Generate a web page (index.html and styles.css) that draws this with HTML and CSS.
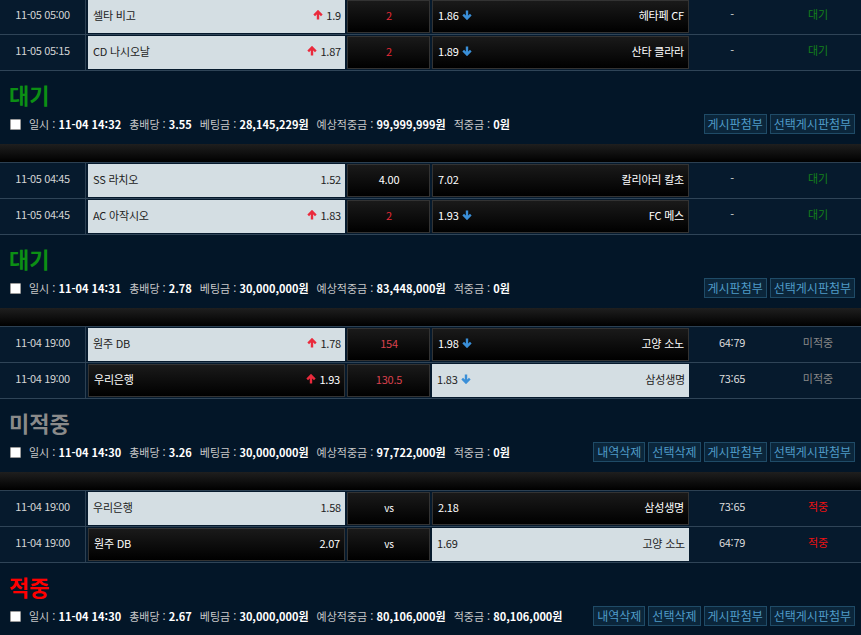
FILE: index.html
```html
<!DOCTYPE html>
<html lang="ko">
<head>
  <meta charset="UTF-8">
  <title>베팅내역</title>
  <link rel="stylesheet" href="styles.css">
</head>
<body>

  <!-- 대기 -->
  <section class="bet">
    <div class="bet-table cut">
      <div class="row">
        <div class="time">11-05 05:00</div>
        <div class="box light home"><span class="team">셀타 비고</span><span class="odd"><svg class="up" viewBox="0 0 10 10"><path d="M5 9.5V1.5M1.2 5.3L5 1.5L8.8 5.3"/></svg>1.9</span></div>
        <div class="box dark draw red">2</div>
        <div class="box dark away"><span class="odd">1.86<svg class="down" viewBox="0 0 10 10"><path d="M5 0.5V8.5M1.2 4.7L5 8.5L8.8 4.7"/></svg></span><span class="team">헤타페 CF</span></div>
        <div class="score">-</div>
        <div class="state wait">대기</div>
      </div>
      <div class="row">
        <div class="time">11-05 05:15</div>
        <div class="box light home"><span class="team">CD 나시오날</span><span class="odd"><svg class="up" viewBox="0 0 10 10"><path d="M5 9.5V1.5M1.2 5.3L5 1.5L8.8 5.3"/></svg>1.87</span></div>
        <div class="box dark draw red">2</div>
        <div class="box dark away"><span class="odd">1.89<svg class="down" viewBox="0 0 10 10"><path d="M5 0.5V8.5M1.2 4.7L5 8.5L8.8 4.7"/></svg></span><span class="team">산타 클라라</span></div>
        <div class="score">-</div>
        <div class="state wait">대기</div>
      </div>
    </div>
    <h2 class="status-title wait">대기</h2>
    <div class="info">
      <input type="checkbox" class="chk">
      <span>일시 : <b>11-04 14:32</b></span>
      <span>총배당 : <b>3.55</b></span>
      <span>베팅금 : <b>28,145,229원</b></span>
      <span>예상적중금 : <b>99,999,999원</b></span>
      <span>적중금 : <b>0원</b></span>
      <div class="btns">
        <button class="btn">게시판첨부</button>
        <button class="btn">선택게시판첨부</button>
      </div>
    </div>
  </section>

  <!-- 대기 -->
  <section class="bet">
    <div class="bar"></div>
    <div class="bet-table">
      <div class="row">
        <div class="time">11-05 04:45</div>
        <div class="box light home"><span class="team">SS 라치오</span><span class="odd">1.52</span></div>
        <div class="box dark draw">4.00</div>
        <div class="box dark away"><span class="odd">7.02</span><span class="team">칼리아리 칼초</span></div>
        <div class="score">-</div>
        <div class="state wait">대기</div>
      </div>
      <div class="row">
        <div class="time">11-05 04:45</div>
        <div class="box light home"><span class="team">AC 아작시오</span><span class="odd"><svg class="up" viewBox="0 0 10 10"><path d="M5 9.5V1.5M1.2 5.3L5 1.5L8.8 5.3"/></svg>1.83</span></div>
        <div class="box dark draw red">2</div>
        <div class="box dark away"><span class="odd">1.93<svg class="down" viewBox="0 0 10 10"><path d="M5 0.5V8.5M1.2 4.7L5 8.5L8.8 4.7"/></svg></span><span class="team">FC 메스</span></div>
        <div class="score">-</div>
        <div class="state wait">대기</div>
      </div>
    </div>
    <h2 class="status-title wait">대기</h2>
    <div class="info">
      <input type="checkbox" class="chk">
      <span>일시 : <b>11-04 14:31</b></span>
      <span>총배당 : <b>2.78</b></span>
      <span>베팅금 : <b>30,000,000원</b></span>
      <span>예상적중금 : <b>83,448,000원</b></span>
      <span>적중금 : <b>0원</b></span>
      <div class="btns">
        <button class="btn">게시판첨부</button>
        <button class="btn">선택게시판첨부</button>
      </div>
    </div>
  </section>

  <!-- 미적중 -->
  <section class="bet">
    <div class="bar"></div>
    <div class="bet-table">
      <div class="row">
        <div class="time">11-04 19:00</div>
        <div class="box light home"><span class="team">원주 DB</span><span class="odd"><svg class="up" viewBox="0 0 10 10"><path d="M5 9.5V1.5M1.2 5.3L5 1.5L8.8 5.3"/></svg>1.78</span></div>
        <div class="box dark draw line">154</div>
        <div class="box dark away"><span class="odd">1.98<svg class="down" viewBox="0 0 10 10"><path d="M5 0.5V8.5M1.2 4.7L5 8.5L8.8 4.7"/></svg></span><span class="team">고양 소노</span></div>
        <div class="score">64:79</div>
        <div class="state miss">미적중</div>
      </div>
      <div class="row">
        <div class="time">11-04 19:00</div>
        <div class="box dark home"><span class="team">우리은행</span><span class="odd"><svg class="up" viewBox="0 0 10 10"><path d="M5 9.5V1.5M1.2 5.3L5 1.5L8.8 5.3"/></svg>1.93</span></div>
        <div class="box dark draw line">130.5</div>
        <div class="box light away"><span class="odd">1.83<svg class="down" viewBox="0 0 10 10"><path d="M5 0.5V8.5M1.2 4.7L5 8.5L8.8 4.7"/></svg></span><span class="team">삼성생명</span></div>
        <div class="score">73:65</div>
        <div class="state miss">미적중</div>
      </div>
    </div>
    <h2 class="status-title miss">미적중</h2>
    <div class="info">
      <input type="checkbox" class="chk">
      <span>일시 : <b>11-04 14:30</b></span>
      <span>총배당 : <b>3.26</b></span>
      <span>베팅금 : <b>30,000,000원</b></span>
      <span>예상적중금 : <b>97,722,000원</b></span>
      <span>적중금 : <b>0원</b></span>
      <div class="btns">
        <button class="btn">내역삭제</button>
        <button class="btn">선택삭제</button>
        <button class="btn">게시판첨부</button>
        <button class="btn">선택게시판첨부</button>
      </div>
    </div>
  </section>

  <!-- 적중 -->
  <section class="bet">
    <div class="bar"></div>
    <div class="bet-table">
      <div class="row">
        <div class="time">11-04 19:00</div>
        <div class="box light home"><span class="team">우리은행</span><span class="odd">1.58</span></div>
        <div class="box dark draw vs">vs</div>
        <div class="box dark away"><span class="odd">2.18</span><span class="team">삼성생명</span></div>
        <div class="score">73:65</div>
        <div class="state hit">적중</div>
      </div>
      <div class="row">
        <div class="time">11-04 19:00</div>
        <div class="box dark home"><span class="team">원주 DB</span><span class="odd">2.07</span></div>
        <div class="box dark draw vs">vs</div>
        <div class="box light away"><span class="odd">1.69</span><span class="team">고양 소노</span></div>
        <div class="score">64:79</div>
        <div class="state hit">적중</div>
      </div>
    </div>
    <h2 class="status-title hit">적중</h2>
    <div class="info">
      <input type="checkbox" class="chk">
      <span>일시 : <b>11-04 14:30</b></span>
      <span>총배당 : <b>2.67</b></span>
      <span>베팅금 : <b>30,000,000원</b></span>
      <span>예상적중금 : <b>80,106,000원</b></span>
      <span>적중금 : <b>80,106,000원</b></span>
      <div class="btns">
        <button class="btn">내역삭제</button>
        <button class="btn">선택삭제</button>
        <button class="btn">게시판첨부</button>
        <button class="btn">선택게시판첨부</button>
      </div>
    </div>
  </section>

</body>
</html>
```

FILE: styles.css
```css
body {
  margin: 0;
  background: #031628;
  font-family: "Noto Sans CJK KR", "Noto Sans", sans-serif;
  font-size: 11px;
  color: #d8d8d8;
  overflow: hidden;
}

.bar {
  height: 18px;
  margin-top: 10px;
  background: linear-gradient(#1f1f1f, #000);
}

.bet-table {
  border-top: 1px solid #2c4052;
}

.bet-table.cut {
  border-top: 0;
  margin-top: -1px;
}

.row {
  display: grid;
  grid-template-columns: 86px 260px 85px 258px 86px 86px;
  height: 35px;
  border-bottom: 1px solid #2f4457;
  background: #061a2d;
}

.time {
  border-right: 1px solid #2c4052;
  text-align: center;
  line-height: 31px;
  color: #d4d4d4;
  letter-spacing: -0.4px;
}

.box {
  margin: 1px;
  height: 33px;
  box-sizing: border-box;
  display: flex;
  align-items: center;
  justify-content: space-between;
  padding: 0 4px 3px 5px;
  letter-spacing: -0.2px;
}

.box.light {
  background: #d4dee3;
  color: #222;
}

.box.dark {
  background: linear-gradient(#1a1a1a, #000);
  border: 1px solid #333;
  color: #fff;
}

.home { margin-left: 2px; }
.away { margin-right: 0; }

.draw {
  justify-content: center;
}

.draw.red { color: #e62a37; }
.draw.line { color: #d9414d; }
.draw.vs { font-size: 10px; }

.odd {
  display: flex;
  align-items: center;
}

.odd svg {
  width: 10px;
  height: 10px;
  fill: none;
  stroke-width: 2.4;
}

.up {
  stroke: #ea2a3c;
  margin-right: 3px;
}

.down {
  stroke: #3a8fd8;
  margin-left: 3px;
}

.score,
.state {
  text-align: center;
  line-height: 31px;
}

.score { color: #dcdcdc; letter-spacing: -0.3px; }

.state.wait { color: #14801a; }
.state.miss { color: #888; }
.state.hit { color: #ee1111; }

.status-title {
  margin: 9px 0 0;
  padding-left: 9px;
  height: 28px;
  line-height: 28px;
  font-size: 22px;
  font-weight: bold;
}

.status-title.wait { color: #0c8f14; }
.status-title.miss { color: #8a8a8a; }
.status-title.hit { color: #ff0000; }

.info {
  display: flex;
  align-items: center;
  height: 20px;
  margin-top: 6px;
  padding: 0 6px 0 10px;
  color: #c8c8c8;
  white-space: nowrap;
}

.chk {
  appearance: none;
  width: 11px;
  height: 11px;
  margin: 0 8px 0 0;
  background: #fff;
  border: 1px solid #9a9a9a;
  border-radius: 1px;
}

.info span {
  margin-right: 8px;
}

.info b {
  color: #fff;
}

.btns {
  margin-left: auto;
  display: flex;
  gap: 3px;
}

.btn {
  height: 20px;
  padding: 0 3px;
  border: 1px solid #1f4b67;
  background: #0b263b;
  color: #4f9bc8;
  font-family: inherit;
  font-size: 12px;
  line-height: 18px;
  white-space: nowrap;
}
```
